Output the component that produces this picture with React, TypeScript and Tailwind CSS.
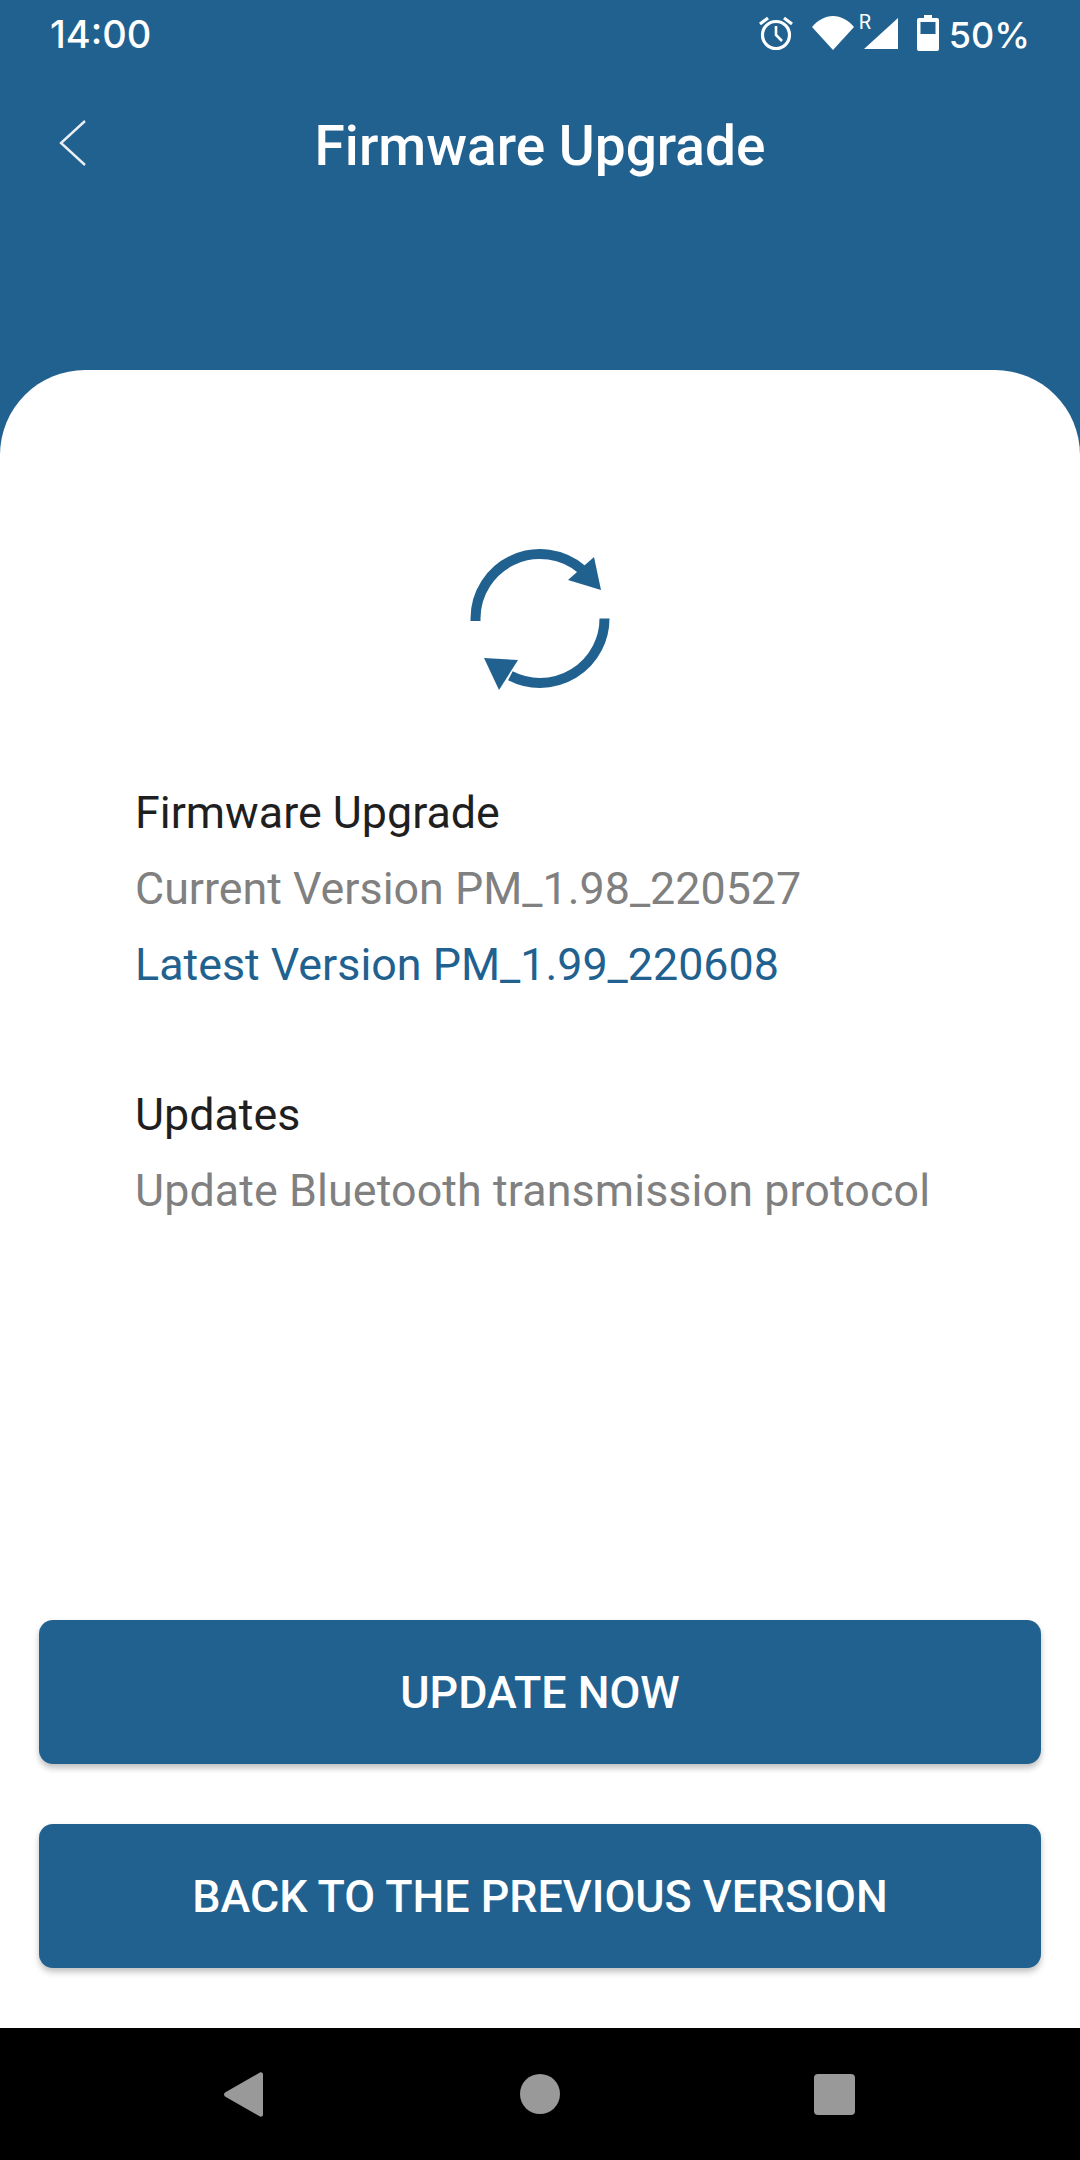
export default function App() {
  return (
    <div className="flex flex-col w-[1080px] h-[2160px] bg-[#21618f] overflow-hidden" style={{ fontFamily: 'Roboto, "Noto Sans", sans-serif' }}>
      {/* status bar */}
      <div className="flex items-center h-[66px] pl-[50px] pr-[50px] text-white shrink-0">
        <span className="text-[38px] leading-none font-medium mt-[2px]" style={{ fontFamily: 'Inter, Roboto, sans-serif' }}>14:00</span>
        <div className="flex items-center ml-auto">
          <svg width="36" height="36" viewBox="0 0 36 36" fill="none" stroke="white" strokeWidth="3.2" className="mr-[18px]">
            <circle cx="18" cy="20" r="13.5" />
            <path d="M18 11v9l6 6" strokeWidth="2.6" />
            <path d="M2 9l8-6M34 9l-8-6" />
          </svg>
          <svg width="42" height="36" viewBox="0 0 42 36" className="mr-[9px]">
            <path d="M0 12C6 5 13 1 21 1s15 4 21 11L21 35z" fill="white" />
          </svg>
          <div className="relative w-[36px] h-[36px] mr-[18px]">
            <svg width="36" height="36" viewBox="0 0 36 36" className="block">
              <path d="M1 34L35 3v31z" fill="white" />
            </svg>
            <span className="absolute left-[-4px] top-[-5px] text-[20px] leading-[24px]">R</span>
          </div>
          <svg width="22" height="36" viewBox="0 0 22 36" className="mr-[10px]">
            <path d="M7 0h8v3h5a2 2 0 0 1 2 2v29a2 2 0 0 1-2 2H2a2 2 0 0 1-2-2V5a2 2 0 0 1 2-2h5z" fill="white" />
            <rect x="3.500" y="7" width="15" height="12" fill="#21618f" />
          </svg>
          <span className="text-[36px] leading-none font-medium mt-[4px]" style={{ fontFamily: 'Inter, Roboto, sans-serif' }}>50%</span>
        </div>
      </div>

      {/* title bar */}
      <div className="relative h-[304px] shrink-0">
        <svg width="32" height="48" viewBox="0 0 32 48" fill="none" stroke="white" strokeWidth="2.400" className="absolute left-[58px] top-[53px] opacity-90">
          <path d="M27 2L3 24l24 22" />
        </svg>
        <h1 className="text-center text-white text-[55px] leading-[60px] font-medium pt-[50px]">Firmware Upgrade</h1>
      </div>

      {/* card */}
      <div className="flex flex-col flex-1 bg-white rounded-t-[85px] min-h-0">
        <div className="flex justify-center pt-[175px]">
          <svg width="140" height="150" viewBox="0 0 140 150" fill="none">
            <path d="M5.500 76V73.500A64.500 64.500 0 0 1 111.900 24.500" stroke="#21618f" strokeWidth="10" />
            <path d="M124 12L131 45L98 35z" fill="#21618f" />
            <path d="M134.500 75V73.500A64.500 64.500 0 0 1 40.400 130.800" stroke="#21618f" strokeWidth="10" />
            <path d="M14 113L48 115L29 145z" fill="#21618f" />
          </svg>
        </div>
        <div className="pl-[135px] pt-[80px] text-[44.8px] leading-[76px]">
          <p className="text-[#1f1f1f]">Firmware Upgrade</p>
          <p className="text-[#808080]">Current Version PM_1.98_220527</p>
          <p className="text-[#21618f]">Latest Version PM_1.99_220608</p>
          <p className="text-[#1f1f1f] mt-[74px]">Updates</p>
          <p className="text-[#808080] tracking-[0.1px]">Update Bluetooth transmission protocol</p>
        </div>
        <div className="flex flex-col gap-[60px] mt-auto px-[39px] pb-[60px]">
          <button className="h-[144px] pt-[2px] rounded-[14px] bg-[#21618f] text-white text-[44.8px] font-medium shadow-[0_4px_6px_rgba(0,0,0,0.25)]">UPDATE NOW</button>
          <button className="h-[144px] pt-[2px] rounded-[14px] bg-[#21618f] text-white text-[44.8px] font-medium shadow-[0_4px_6px_rgba(0,0,0,0.25)]">BACK TO THE PREVIOUS VERSION</button>
        </div>
        {/* nav bar */}
        <div className="flex items-center h-[132px] bg-black shrink-0 pl-[224px]">
          <svg width="39" height="45" viewBox="0 0 39 45">
            <path d="M1 20.500L35.500 .8c1.300-1 3.500-.3 3.500 1.500v40.400c0 1.800-2.200 2.500-3.500 1.500L1 24.500c-1.300-1.100-1.300-2.900 0-4z" fill="#999999" />
          </svg>
          <div className="w-[40px] h-[40px] rounded-full bg-[#999999] ml-[257px]" />
          <div className="w-[41px] h-[41px] rounded-[4px] bg-[#999999] ml-[254px]" />
        </div>
      </div>
    </div>
  );
}
